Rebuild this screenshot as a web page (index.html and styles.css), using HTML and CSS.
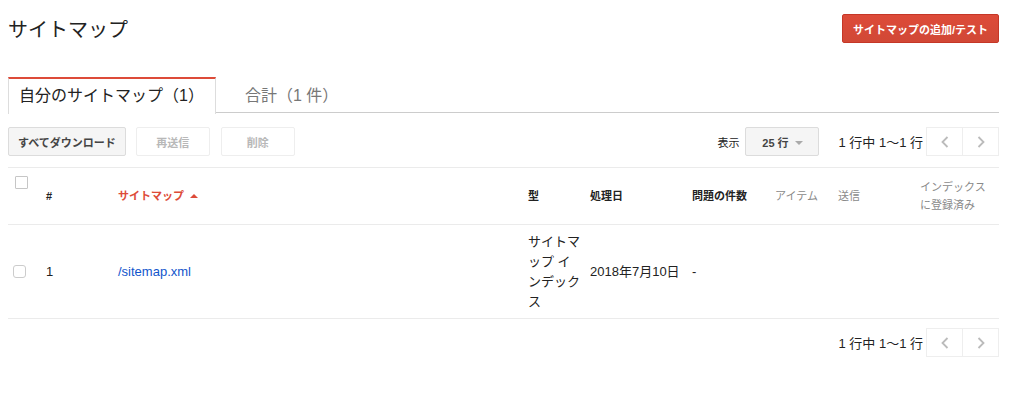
FILE: index.html
```
<!DOCTYPE html>
<html>
	<head>
		<meta charset="utf-8" />
		<title>サイトマップ</title>
		<link rel="stylesheet" href="styles.css">
	</head>
	<body>
		<div class="page">
			<div class="header">
				<h1 class="title">サイトマップ</h1>
				<button class="btn-red">サイトマップの追加/テスト</button>
			</div>

			<div class="tabs">
				<div class="tab active">自分のサイトマップ（1）</div>
				<div class="tab">合計（1 件）</div>
			</div>

			<div class="toolbar">
				<div class="actions">
					<button class="btn">すべてダウンロード</button>
					<button class="btn disabled">再送信</button>
					<button class="btn disabled">削除</button>
				</div>
				<div class="paging">
					<span class="show-label">表示</span>
					<button class="btn select">25 行 <span class="caret"></span></button>
					<span class="count">1 行中 1〜1 行</span>
					<div class="pager">
						<button class="pg"><svg width="10" height="14" viewBox="0 0 10 14"><path d="M7.5 2 L2.5 7 L7.5 12" fill="none" stroke="#bbb" stroke-width="1.8"/></svg></button>
						<button class="pg"><svg width="10" height="14" viewBox="0 0 10 14"><path d="M2.5 2 L7.5 7 L2.5 12" fill="none" stroke="#bbb" stroke-width="1.8"/></svg></button>
					</div>
				</div>
			</div>

			<table class="grid">
				<colgroup>
					<col style="width:38px">
					<col style="width:72px">
					<col style="width:410px">
					<col style="width:62px">
					<col style="width:102px">
					<col style="width:83px">
					<col style="width:63px">
					<col style="width:82px">
					<col>
				</colgroup>
				<thead>
					<tr>
						<th class="chk-head"><span class="chk"></span></th>
						<th>#</th>
						<th class="sorted">サイトマップ <span class="up"></span></th>
						<th>型</th>
						<th>処理日</th>
						<th>問題の件数</th>
						<th class="muted">アイテム</th>
						<th class="muted">送信</th>
						<th class="muted">インデックス<br>に登録済み</th>
					</tr>
				</thead>
				<tbody>
					<tr>
						<td class="chk-cell"><span class="chk small"></span></td>
						<td>1</td>
						<td><a href="#">/sitemap.xml</a></td>
						<td class="type">サイトマップ インデックス</td>
						<td>2018年7月10日</td>
						<td>-</td>
						<td></td>
						<td></td>
						<td></td>
					</tr>
				</tbody>
			</table>

			<div class="footer-paging">
				<span class="count">1 行中 1〜1 行</span>
				<div class="pager">
					<button class="pg"><svg width="10" height="14" viewBox="0 0 10 14"><path d="M7.5 2 L2.5 7 L7.5 12" fill="none" stroke="#bbb" stroke-width="1.8"/></svg></button>
					<button class="pg"><svg width="10" height="14" viewBox="0 0 10 14"><path d="M2.5 2 L7.5 7 L2.5 12" fill="none" stroke="#bbb" stroke-width="1.8"/></svg></button>
				</div>
			</div>
		</div>
	</body>
</html>
```

FILE: styles.css
```
body {
	margin: 0;
	font-family: "Liberation Sans", Arial, "Noto Sans CJK JP", sans-serif;
	color: #222;
	background: #fff;
}
.page {
	padding: 0 25px 0 8px;
}
.header {
	height: 57px;
	display: flex;
	align-items: center;
	justify-content: space-between;
}
.title {
	margin: 0;
	font-size: 20px;
	font-weight: 400;
	color: #222;
}
button {
	font-family: inherit;
	cursor: default;
}
.btn-red {
	height: 29px;
	padding: 0 10px;
	background: linear-gradient(#dd4b39, #d14836);
	border: 1px solid #c53727;
	border-radius: 2px;
	color: #fff;
	font-size: 11px;
	font-weight: 700;
}
/* tabs */
.tabs {
	margin-top: 20px;
	display: flex;
	border-bottom: 1px solid #ccc;
	height: 35px;
}
.tab {
	padding: 0 29px;
	font-size: 16px;
	line-height: 37px;
	color: #777;
}
.tab.active {
	padding: 0 10px;
	width: 186px;
	color: #222;
	border-top: 2px solid #dd4b39;
	border-left: 1px solid #ddd;
	border-right: 1px solid #ddd;
	background: #fff;
	height: 34px;
	line-height: 33px;
	margin-bottom: -1px;
	padding-bottom: 1px;
}
/* toolbar */
.toolbar {
	margin-top: 14px;
	display: flex;
	justify-content: space-between;
	align-items: center;
	height: 29px;
}
.actions, .paging, .footer-paging {
	display: flex;
	align-items: center;
}
.actions {
	gap: 10px;
}
.btn {
	height: 29px;
	padding: 0 9px;
	background: #f5f5f5;
	border: 1px solid #dcdcdc;
	border-radius: 2px;
	font-size: 11px;
	font-weight: 700;
	color: #444;
}
.btn.disabled {
	background: #fff;
	border-color: #eee;
	color: #b8b8b8;
	width: 74px;
}
.btn.disabled + .btn.disabled {
	margin-left: 1px;
}
.show-label {
	font-size: 11px;
	margin-right: 6px;
	color: #222;
}
.btn.select {
	width: 74px;
	text-align: center;
}
.caret {
	display: inline-block;
	border-left: 4px solid transparent;
	border-right: 4px solid transparent;
	border-top: 4px solid #aaa;
	vertical-align: 2px;
	margin-left: 3px;
}
.count {
	font-size: 13px;
	margin-left: 19px;
	margin-right: 3px;
	color: #222;
}
.pager {
	display: flex;
}
.pg {
	width: 37px;
	height: 29px;
	background: #fff;
	border: 1px solid #eee;
	padding: 0;
	display: flex;
	align-items: center;
	justify-content: center;
}
.pg + .pg {
	margin-left: -1px;
}
/* table */
.grid {
	margin-top: 11px;
	width: 100%;
	border-collapse: collapse;
	table-layout: fixed;
	border-top: 1px solid #ebebeb;
}
.grid th {
	height: 56px;
	text-align: left;
	font-size: 11px;
	font-weight: 700;
	line-height: 18px;
	padding: 0;
	color: #222;
	border-bottom: 1px solid #ebebeb;
	vertical-align: middle;
}
.grid th.sorted {
	color: #dd4b39;
}
.grid th.muted {
	color: #8a8a8a;
	font-weight: 400;
}
.up {
	display: inline-block;
	border-left: 4px solid transparent;
	border-right: 4px solid transparent;
	border-bottom: 4px solid #dd4b39;
	vertical-align: 2px;
	margin-left: 3px;
}
.grid td {
	height: 93px;
	font-size: 13px;
	line-height: 20px;
	padding: 0;
	border-bottom: 1px solid #ebebeb;
	vertical-align: middle;
}
.grid td.type {
	padding-right: 8px;
}
.grid a {
	color: #1155cc;
	text-decoration: none;
}
.chk {
	display: block;
	width: 11px;
	height: 11px;
	border: 1px solid #c6c6c6;
	border-radius: 1px;
	background: #fff;
}
.grid th.chk-head {
	vertical-align: top;
}
.chk-head .chk {
	margin: 8px 0 0 7px;
}
.grid td.chk-cell {
	padding-left: 5px;
}
.chk.small {
	border-radius: 3px;
	border-color: #ccc;
}
.footer-paging {
	margin-top: 9px;
	justify-content: flex-end;
}
```
